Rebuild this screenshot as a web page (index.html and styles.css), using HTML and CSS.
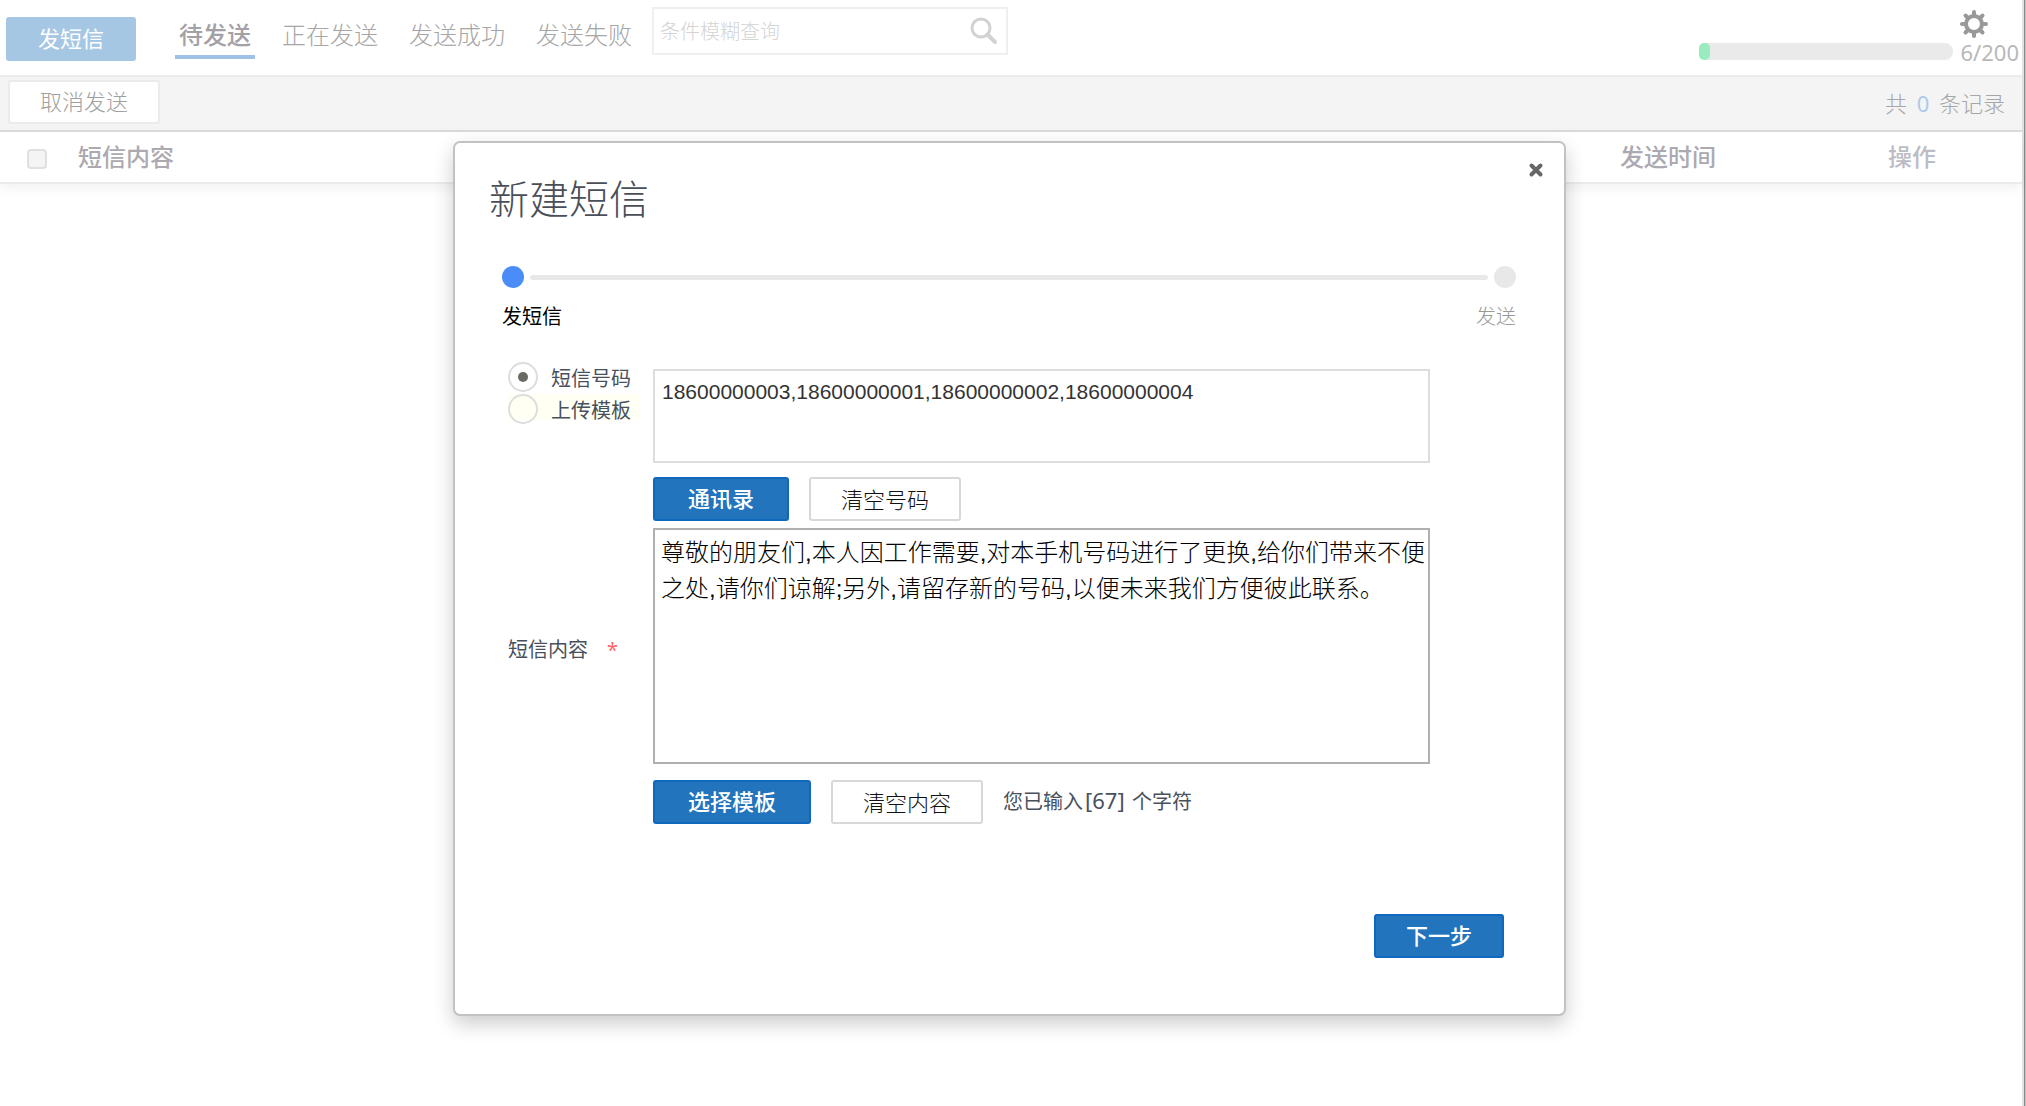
FILE: index.html
```html
<!DOCTYPE html>
<html lang="zh-CN">
<head>
<meta charset="utf-8">
<title>新建短信</title>
<link rel="stylesheet" href="styles.css">
</head>
<body>
<div class="app">
  <header class="topbar">
    <button type="button" class="btn btn-send">发短信</button>
    <nav class="tabs">
      <a href="#pending" class="tab tab-active">待发送</a>
      <a href="#sending" class="tab">正在发送</a>
      <a href="#success" class="tab">发送成功</a>
      <a href="#failed" class="tab">发送失败</a>
    </nav>
    <form class="search" role="search">
      <input class="search-input" type="search" placeholder="条件模糊查询" aria-label="条件模糊查询">
      <button type="submit" class="icon-btn" aria-label="查询">
        <svg width="28" height="28" viewBox="0 0 28 28" fill="none" stroke="#d2d2d2"><circle cx="11" cy="11" r="9" stroke-width="3"/><path d="M17.5 17.5 25 25" stroke-width="4" stroke-linecap="round"/></svg>
      </button>
    </form>
    <div class="quota">
      <div class="quota-bar"><div class="quota-fill" style="width:4%"></div></div>
      <div class="quota-side">
        <button type="button" class="icon-btn" aria-label="设置">
          <svg width="28" height="28" viewBox="0 0 28 28" fill="none" stroke="#999"><circle cx="14" cy="14" r="8" stroke-width="4"/><path d="M14 2v3M14 23v3M2 14h3M23 14h3M5.500 5.500l2 2M20.500 20.500l2 2M5.500 22.500l2-2M20.500 7.500l2-2" stroke-width="4" stroke-linecap="round"/></svg>
        </button>
        <span class="quota-text">6/200</span>
      </div>
    </div>
  </header>

  <div class="toolbar">
    <button type="button" class="btn btn-cancel">取消发送</button>
    <p class="total">共 <span class="total-num">0</span> 条记录</p>
  </div>

  <table class="list">
    <thead>
      <tr>
        <th class="col-check"><input type="checkbox" class="check" aria-label="全选"></th>
        <th class="col-content">短信内容</th>
        <th class="col-time">发送时间</th>
        <th class="col-action">操作</th>
      </tr>
    </thead>
  </table>

  <div class="overlay">
    <section class="dialog" role="dialog" aria-labelledby="dialog-title">
      <button type="button" class="icon-btn dialog-close" aria-label="关闭">
        <svg width="16" height="16" viewBox="0 0 16 16" stroke="#666" stroke-width="4" stroke-linecap="round"><path d="M3.500 3.500l9 9M12.500 3.500l-9 9"/></svg>
      </button>
      <h1 class="dialog-title" id="dialog-title">新建短信</h1>
      <div class="steps">
        <div class="steps-track">
          <span class="dot dot-on"></span>
          <span class="line"></span>
          <span class="dot dot-end"></span>
        </div>
        <div class="steps-labels"><span class="step-on">发短信</span><span>发送</span></div>
      </div>
      <form class="form">
        <div class="modes">
          <label class="mode"><input type="radio" class="radio" name="mode" checked>短信号码</label>
          <label class="mode mode-hover"><input type="radio" class="radio" name="mode">上传模板</label>
        </div>
        <div class="field-numbers">
          <textarea class="area area-numbers" aria-label="短信号码">18600000003,18600000001,18600000002,18600000004</textarea>
          <div class="actions">
            <button type="button" class="btn btn-primary">通讯录</button>
            <button type="button" class="btn btn-plain">清空号码</button>
          </div>
        </div>
        <label class="content-label" for="content">短信内容<span class="required">*</span></label>
        <textarea class="area area-content" id="content">尊敬的朋友们,本人因工作需要,对本手机号码进行了更换,给你们带来不便之处,请你们谅解;另外,请留存新的号码,以便未来我们方便彼此联系。</textarea>
        <div class="actions actions-content">
          <button type="button" class="btn btn-primary">选择模板</button>
          <button type="button" class="btn btn-plain">清空内容</button>
          <p class="counter">您已输入<span class="counter-num">[67]</span> 个字符</p>
        </div>
        <div class="footer"><button type="submit" class="btn btn-primary btn-next">下一步</button></div>
      </form>
    </section>
  </div>
</div>
<div class="edge"></div>
</body>
</html>
```
FILE: styles.css
```css
* { box-sizing: border-box; }

body {
  margin: 0;
  min-height: 100vh;
  display: flex;
  background: #fff;
  color: #a6a6a6;
  font-family: "Noto Sans", "Noto Sans CJK SC", sans-serif;
  font-size: 22px;
}

button, input, textarea { font-family: inherit; }
p, h1 { margin: 0; }
svg { display: block; }

.app { position: relative; flex: 1; min-width: 0; }
.edge {
  width: 4px;
  background: linear-gradient(90deg, #e2e2e2 2px, #888 2px, #888 3px, #c4c4c4 3px);
}

.btn {
  height: 44px;
  padding: 0 0 2px;
  border: 2px solid #d8d8d8;
  border-radius: 3px;
  background: #fff;
  font-size: 22px;
  line-height: 32px;
  white-space: nowrap;
}
.icon-btn { padding: 0; border: 0; background: none; }

/* top bar */
.topbar {
  display: flex;
  align-items: flex-start;
  height: 77px;
  padding-left: 6px;
  border-bottom: 2px solid #ebebeb;
}
.btn-send {
  width: 130px;
  margin-top: 17px;
  border-color: #a6c7e4;
  background: #a6c7e4;
  color: #fff;
}
.tabs { display: flex; gap: 23px; margin: 15px 0 0 39px; }
.tab {
  padding: 0 4px;
  border-bottom: 4px solid transparent;
  color: #a6a6a6;
  font-size: 24px;
  font-weight: 300;
  line-height: 40px;
  text-decoration: none;
  white-space: nowrap;
}
.tab-active { border-color: #9cc3e6; color: #a3a0a6; font-weight: 500; }
.search {
  display: flex;
  align-items: center;
  width: 356px;
  height: 48px;
  margin: 7px 0 0 16px;
  padding: 0 8px 0 6px;
  border: 2px solid #efefef;
}
.search-input {
  flex: 1;
  min-width: 0;
  padding: 0;
  border: 0;
  outline: 0;
  background: none;
  font-size: 20px;
}
.search-input::placeholder { color: #d4d4d4; font-weight: 300; }
.quota { display: flex; align-items: flex-start; gap: 7px; margin: 10px 3px 0 auto; }
.quota-bar { width: 254px; height: 17px; margin-top: 33px; border-radius: 8px; background: #eaeaea; }
.quota-fill { height: 100%; border-radius: 5px; background: #98ecbe; }
.quota-text { display: block; color: #b8b8b8; line-height: 28px; margin-top: -6px; }

/* toolbar */
.toolbar {
  display: flex;
  align-items: center;
  justify-content: space-between;
  height: 55px;
  padding: 0 17px 4px 8px;
  border-bottom: 2px solid #dcdcdc;
  background: #f4f4f4;
}
.btn-cancel { width: 152px; border-color: #ebebeb; color: #a0a0a0; font-weight: 300; }
.total { font-weight: 300; white-space: pre; }
.total-num { margin: 0 4px; color: #adc9ec; font-weight: 400; }

/* message list */
.list {
  width: 100%;
  border-collapse: collapse;
  table-layout: fixed;
  border-bottom: 2px solid #ebebeb;
  box-shadow: 0 4px 12px rgba(0, 0, 0, .06);
}
.list th {
  height: 51px;
  padding: 0;
  color: #aca9b0;
  font-size: 24px;
  font-weight: 500;
  line-height: 36px;
  text-align: left;
}
.list .col-check { width: 78px; padding-left: 27px; }
.list .col-time { width: 268px; }
.list .col-action { width: 134px; color: #bcbcc4; }
.check {
  appearance: none;
  display: block;
  width: 20px;
  height: 20px;
  margin: 4px 0 0;
  border: 2px solid #e0e0e0;
  border-radius: 4px;
  background: #f4f4f4;
}

/* dialog */
.overlay {
  position: absolute;
  inset: 0 3px 0 0;
  display: flex;
  align-items: flex-start;
  justify-content: center;
  padding-top: 141px;
}
.dialog {
  position: relative;
  width: min(1113px, 100% - 48px);
  padding: 32px 46px 56px 34px;
  border: 2px solid #c2c2c2;
  border-radius: 7px;
  background: #fff;
  box-shadow: 0 8px 20px rgba(0, 0, 0, .2);
}
.dialog-close { position: absolute; top: 19px; right: 20px; }
.dialog-title { color: #4a4e58; font-size: 40px; font-weight: 300; line-height: 48px; }

.steps { margin: 43px 0 0 13px; }
.steps-track { display: flex; align-items: center; gap: 6px; padding-right: 2px; }
.dot { width: 22px; height: 22px; border-radius: 50%; background: #e8e8e8; }
.dot-on { background: #4a8df8; }
.line { flex: 1; height: 5px; border-radius: 3px; background: #e8e8e8; }
.steps-labels {
  display: flex;
  justify-content: space-between;
  margin-top: 15px;
  padding-right: 2px;
  color: #999;
  font-size: 20px;
  font-weight: 300;
  line-height: 28px;
}
.step-on { color: #000; font-weight: 400; }

.form {
  display: grid;
  grid-template-columns: 145px 1fr;
  margin: 31px 88px 0 19px;
  color: #48505c;
}
.modes { display: flex; flex-direction: column; align-items: flex-start; gap: 2px; }
.mode {
  display: flex;
  align-items: center;
  gap: 13px;
  width: 131px;
  height: 30px;
  font-size: 20px;
  white-space: nowrap;
}
.mode-hover { background: linear-gradient(#fffff4 26px, transparent 26px); }
.radio {
  appearance: none;
  display: grid;
  place-items: center;
  width: 30px;
  height: 30px;
  margin: 0;
  border: 2px solid #ddd;
  border-radius: 50%;
}
.radio:checked::before {
  content: "";
  width: 10px;
  height: 10px;
  border-radius: 50%;
  background: #6b6963;
}
.area {
  display: block;
  width: 100%;
  border-radius: 0;
  outline: 0;
  background: #fff;
  resize: none;
  font-family: "Liberation Sans", "Noto Sans CJK SC", sans-serif;
}
.field-numbers { padding-top: 7px; }
.area-numbers {
  height: 94px;
  padding: 7px;
  border: 2px solid #ddd;
  color: #333;
  font-size: 21px;
  line-height: 28px;
}
.actions { display: flex; gap: 20px; margin-top: 14px; }
.btn-primary { padding: 0 33px 2px; border-color: #1068bc; background: #2274bd; color: #fff; font-weight: 500; }
.btn-plain { padding: 0 30px; color: #111; font-weight: 300; }
.content-label { align-self: center; padding-top: 12px; font-size: 20px; white-space: nowrap; }
.required { margin-left: 19px; color: #f66; }
.area-content {
  height: 236px;
  margin-top: 7px;
  padding: 5px 0 5px 6px;
  border: 2px solid #b0b0b0;
  color: #000;
  font-size: 24px;
  font-weight: 300;
  line-height: 36px;
}
.actions-content { grid-column: 2; margin-top: 16px; }
.counter { font-size: 20px; line-height: 40px; white-space: nowrap; }
.counter-num { margin: 0 2px; font-size: 22px; }
.footer { grid-column: 1 / -1; display: flex; justify-content: flex-end; margin: 90px -74px 0 0; }
.btn-next { width: 130px; padding: 0 0 2px; }
```
